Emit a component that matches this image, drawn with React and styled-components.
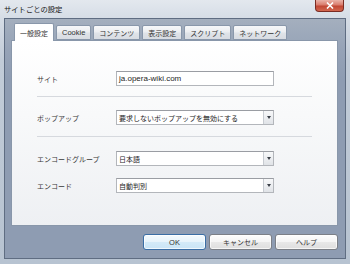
import React from "react";
import styled, { createGlobalStyle } from "styled-components";

const Global = createGlobalStyle`
  html, body { margin: 0; padding: 0; }
  body {
    width: 350px; height: 264px; overflow: hidden;
    font-family: "Liberation Sans", "Noto Sans CJK JP", sans-serif;
    font-size: 7px;
    color: #2a2a2a;
  }
`;

const Window = styled.div`
  width: 350px;
  height: 264px;
  box-sizing: border-box;
  display: flex;
  flex-direction: column;
  background: linear-gradient(to bottom, #e3e8ee 0px, #d6dde6 18px, #c2ccd8 60px, #b7c3d1 100%);
`;

const TitleBar = styled.div`
  height: 18px;
  display: flex;
  align-items: flex-start;
  justify-content: space-between;
  padding-left: 4px;
`;

const Title = styled.div`
  margin-top: 4px;
  font-size: 7.3px;
  color: #141414;
`;

const CloseButton = styled.div`
  width: 29px;
  height: 12px;
  margin-right: 6px;
  box-sizing: border-box;
  border: 1px solid #7a2b22;
  border-top: none;
  border-radius: 0 0 4px 4px;
  background: linear-gradient(to bottom, #eab2a8 0%, #d97b6c 45%, #c14634 55%, #d2674f 100%);
  display: flex;
  align-items: center;
  justify-content: center;
  svg { display: block; }
`;

const Body = styled.div`
  flex: 1;
  margin: 0 4px 5px 4px;
  border: 1px solid #5f6d82;
  background: linear-gradient(to bottom, #a4afbe 0px, #96a3b7 30px, #8e9cb2 60px, #8e9cb2 100%);
  padding: 4px 7px 8px 6px;
  display: flex;
  flex-direction: column;
`;

const TabStrip = styled.div`
  height: 17px;
  display: flex;
  align-items: flex-end;
  padding-left: 3px;
  gap: 2px;
`;

const Tab = styled.div`
  position: relative;
  z-index: ${(p) => (p.$active ? 2 : 1)};
  box-sizing: border-box;
  height: ${(p) => (p.$active ? "18px" : "15px")};
  margin-bottom: ${(p) => (p.$active ? "-1px" : "0")};
  padding: 0 5px;
  display: flex;
  align-items: center;
  border: 1px solid #8997aa;
  border-bottom: ${(p) => (p.$active ? "none" : "1px solid #8997aa")};
  border-radius: 2px 2px 0 0;
  background: ${(p) =>
    p.$active
      ? "#ffffff"
      : "linear-gradient(to bottom, #f6f7f9 0%, #eceef1 45%, #dfe3e8 55%, #d8dce2 100%)"};
  color: #333;
  font-size: ${(p) => (p.$latin ? "7.5px" : "7px")};
  white-space: nowrap;
`;

const Panel = styled.div`
  height: 186px;
  box-sizing: border-box;
  border: 1px solid #8997aa;
  background: linear-gradient(to bottom, #ffffff 0%, #f8f9fa 40%, #eef0f3 100%);
  padding: 30px 0 0 25px;
  display: flex;
  flex-direction: column;
`;

const Row = styled.div`
  display: flex;
  align-items: center;
  height: 15px;
  margin-top: ${(p) => p.$mt || 0}px;
`;

const Label = styled.div`
  width: 79px;
  color: #383838;
  white-space: nowrap;
`;

const TextBox = styled.div`
  width: 158px;
  height: 15px;
  box-sizing: border-box;
  border: 1px solid #b3b6bb;
  border-top-color: #9a9da3;
  background: #ffffff;
  display: flex;
  align-items: center;
  padding-left: 2px;
  color: #262626;
  font-size: 8px;
`;

const Select = styled.div`
  width: 158px;
  height: 15px;
  box-sizing: border-box;
  border: 1px solid #b3b6bb;
  border-top-color: #9a9da3;
  background: #ffffff;
  display: flex;
  align-items: stretch;
`;

const SelectText = styled.div`
  flex: 1;
  display: flex;
  align-items: center;
  padding-left: 2px;
  color: #262626;
  white-space: nowrap;
  overflow: hidden;
`;

const DropButton = styled.div`
  width: 9px;
  border-left: 1px solid #c7cbd1;
  background: linear-gradient(to bottom, #f7f8f9 0%, #eceef1 50%, #e0e3e7 100%);
  display: flex;
  align-items: center;
  justify-content: center;
`;

const Arrow = styled.div`
  width: 0;
  height: 0;
  border-left: 2.5px solid transparent;
  border-right: 2.5px solid transparent;
  border-top: 3px solid #3a3f47;
`;

const Separator = styled.div`
  width: 275px;
  height: 1px;
  background: #d6d9de;
  margin-top: ${(p) => p.$mt}px;
`;

const ButtonRow = styled.div`
  display: flex;
  justify-content: flex-end;
  gap: 3px;
  margin-top: 8px;
`;

const Button = styled.div`
  width: 63px;
  height: 16px;
  box-sizing: border-box;
  border: 1px solid ${(p) => (p.$default ? "#3a6ea5" : "#7b7f86")};
  border-radius: 3px;
  background: ${(p) =>
    p.$default
      ? "linear-gradient(to bottom, #f4fafe 0%, #e6f3fb 50%, #d3eaf8 51%, #c9e4f6 100%)"
      : "linear-gradient(to bottom, #fdfdfd 0%, #f4f4f4 50%, #e8e8e8 51%, #dedede 100%)"};
  box-shadow: inset 0 0 0 1px rgba(255,255,255,0.7);
  display: flex;
  align-items: center;
  justify-content: center;
  color: #333;
  font-size: ${(p) => (p.$latin ? "7.5px" : "7px")};
`;

export default function App() {
  const tabs = ["一般設定", "Cookie", "コンテンツ", "表示設定", "スクリプト", "ネットワーク"];
  return (
    <>
      <Global />
      <Window>
        <TitleBar>
          <Title>サイトごとの設定</Title>
          <CloseButton>
            <svg width="8" height="7" viewBox="0 0 8 7">
              <path d="M1 0.5 L7 6.5 M7 0.5 L1 6.5" stroke="#ffffff" strokeWidth="1.6" />
            </svg>
          </CloseButton>
        </TitleBar>
        <Body>
          <TabStrip>
            {tabs.map((t, i) => (
              <Tab key={t} $active={i === 0} $latin={t === "Cookie"}>{t}</Tab>
            ))}
          </TabStrip>
          <Panel>
            <Row>
              <Label>サイト</Label>
              <TextBox>ja.opera-wiki.com</TextBox>
            </Row>
            <Separator $mt={10} />
            <Row $mt={13}>
              <Label>ポップアップ</Label>
              <Select>
                <SelectText>要求しないポップアップを無効にする</SelectText>
                <DropButton><Arrow /></DropButton>
              </Select>
            </Row>
            <Separator $mt={11} />
            <Row $mt={14}>
              <Label>エンコードグループ</Label>
              <Select>
                <SelectText>日本語</SelectText>
                <DropButton><Arrow /></DropButton>
              </Select>
            </Row>
            <Row $mt={12}>
              <Label>エンコード</Label>
              <Select>
                <SelectText>自動判別</SelectText>
                <DropButton><Arrow /></DropButton>
              </Select>
            </Row>
          </Panel>
          <ButtonRow>
            <Button $default $latin>OK</Button>
            <Button>キャンセル</Button>
            <Button>ヘルプ</Button>
          </ButtonRow>
        </Body>
      </Window>
    </>
  );
}
